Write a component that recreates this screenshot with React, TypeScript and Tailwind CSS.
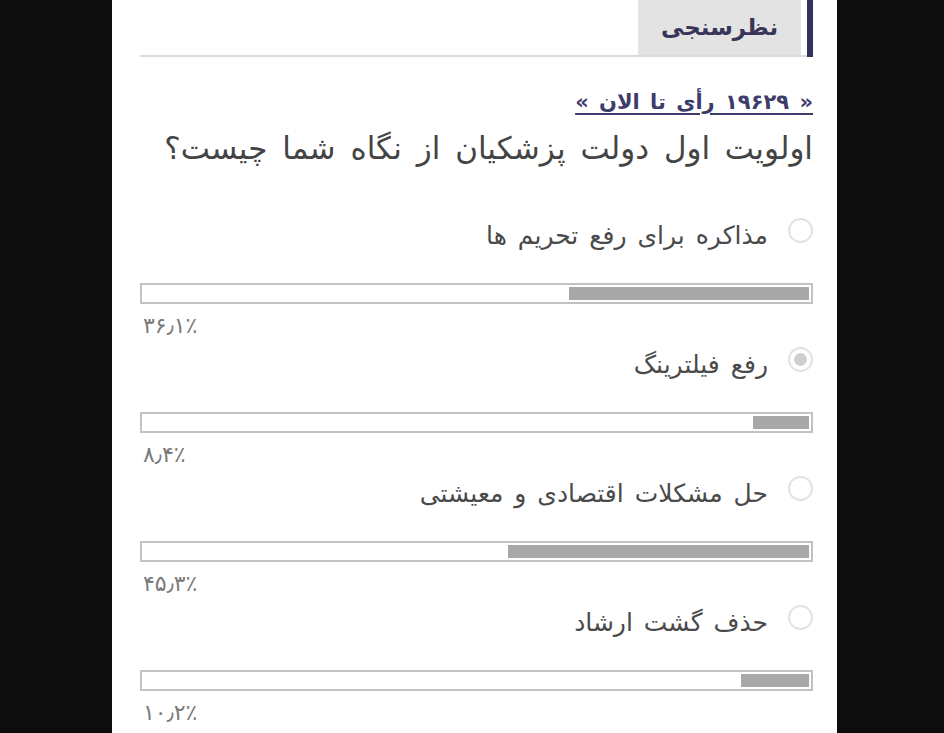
import React from "react";

interface PollOption {
  label: string;
  percent: number;
  percentText: string;
  selected?: boolean;
}

const options: PollOption[] = [
  { label: "مذاکره برای رفع تحریم ها", percent: 36.1, percentText: "۳۶٫۱٪" },
  { label: "رفع فیلترینگ", percent: 8.4, percentText: "۸٫۴٪", selected: true },
  { label: "حل مشکلات اقتصادی و معیشتی", percent: 45.3, percentText: "۴۵٫۳٪" },
  { label: "حذف گشت ارشاد", percent: 10.2, percentText: "۱۰٫۲٪" },
];

const PollRow: React.FC<{ option: PollOption }> = ({ option }) => (
  <div className="pt-[10px]">
    <label className="flex items-center gap-[20px] h-[34px] cursor-pointer">
      <span className="mb-[12px] w-[25px] h-[25px] rounded-full border-2 border-[#e2e2e2] bg-white flex items-center justify-center shrink-0">
        {option.selected && <span className="w-[13px] h-[13px] rounded-full bg-[#cfcfcf]"></span>}
      </span>
      <span className="text-[25px] leading-[34px] text-[#4a4a4a] [word-spacing:3px]">{option.label}</span>
    </label>

    <div className="mt-[30px] h-[21px] border-2 border-[#c2c2c2] bg-white p-[2px] flex">
      <div className="h-full bg-[#a8a8a8]" style={{ width: `${option.percent}%` }}></div>
    </div>

    <div className="mt-[10px] h-[24px] text-left pl-[3px]">
      <span dir="ltr" className="text-[22px] leading-[24px] tracking-[3px] text-[#7a7a7a]">
        {option.percentText}
      </span>
    </div>
  </div>
);

export default function App() {
  return (
    <div
      className="min-h-screen h-[733px] overflow-hidden bg-[#0d0d0d] pl-[112px]"
      style={{ fontFamily: '"DejaVu Sans", "Noto Sans", sans-serif' }}
    >
      <div dir="rtl" className="w-[725px] h-full bg-white pr-[24px] pl-[28px]">
        {/* header tab */}
        <div className="flex items-stretch h-[57px]">
          <div className="w-[6px] bg-[#33325a]"></div>
          <div className="flex-1 flex border-b-2 border-[#dcdcdc] pr-[6px]">
            <div className="w-[163px] h-full bg-[#e3e3e3] flex items-center justify-center">
              <span className="text-[23px] font-bold text-[#37365a]">نظرسنجی</span>
            </div>
          </div>
        </div>

        {/* votes link */}
        <div className="mt-[31px]">
          <a href="#" className="text-[21px] leading-[28px] font-bold text-[#3d3c6b] underline underline-offset-4 [word-spacing:3px]">
            « ۱۹۶۲۹ رأی تا الان »
          </a>
        </div>

        {/* question */}
        <h3 className="mt-[12px] text-[31px] leading-[40px] text-[#444444] [word-spacing:5px]">
          اولویت اول دولت پزشکیان از نگاه شما چیست؟
        </h3>

        <div className="mt-[41px]">
          {options.map((opt) => (
            <PollRow key={opt.label} option={opt} />
          ))}
        </div>
      </div>
    </div>
  );
}
